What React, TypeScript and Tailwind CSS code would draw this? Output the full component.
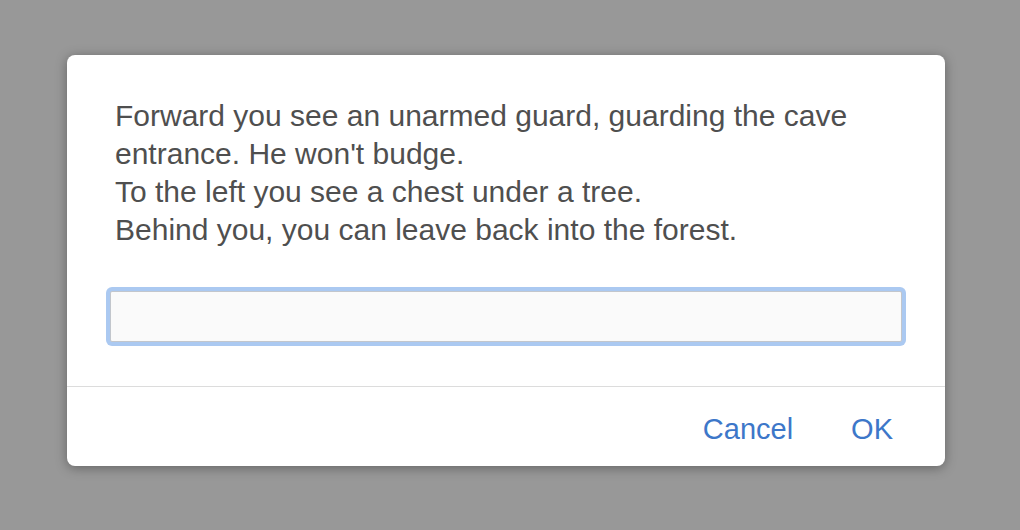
import React, { useState } from 'react';

export default function App() {
  const [answer, setAnswer] = useState('');

  return (
    <div className="w-[1020px] h-[530px] bg-[#989898] overflow-hidden" style={{ fontFamily: '"Liberation Sans", Arial, sans-serif' }}>
      <div className="ml-[67px] mt-[55px] w-[878px] h-[411px] bg-white rounded-[8px] shadow-[0_2px_12px_rgba(0,0,0,0.35)] flex flex-col">
        {/* Message */}
        <div className="px-[48px] pt-[42px] pb-[38px] text-[30px] leading-[38px] text-[#4f4f4f]">
          <p>Forward you see an unarmed guard, guarding the cave entrance. He won't budge.</p>
          <p>To the left you see a chest under a tree.</p>
          <p>Behind you, you can leave back into the forest.</p>
        </div>

        {/* Prompt input */}
        <div className="px-[39px]">
          <div className="h-[59px] p-[4px] bg-[#abc9f1] rounded-[6px]">
            <input
              value={answer}
              onChange={(e) => setAnswer(e.target.value)}
              className="w-full h-full bg-[#fafafa] border border-[#c2c6cc] rounded-[2px] outline-none px-3 text-[28px] text-[#4f4f4f]"
            />
          </div>
        </div>

        {/* Footer */}
        <div className="mt-[40px] border-t border-[#dcdcdc] flex-1 flex items-center justify-end gap-[58px] pr-[52px] pt-[7px]">
          <button className="text-[29px] text-[#3d77c9]">Cancel</button>
          <button className="text-[29px] text-[#3d77c9]">OK</button>
        </div>
      </div>
    </div>
  );
}
